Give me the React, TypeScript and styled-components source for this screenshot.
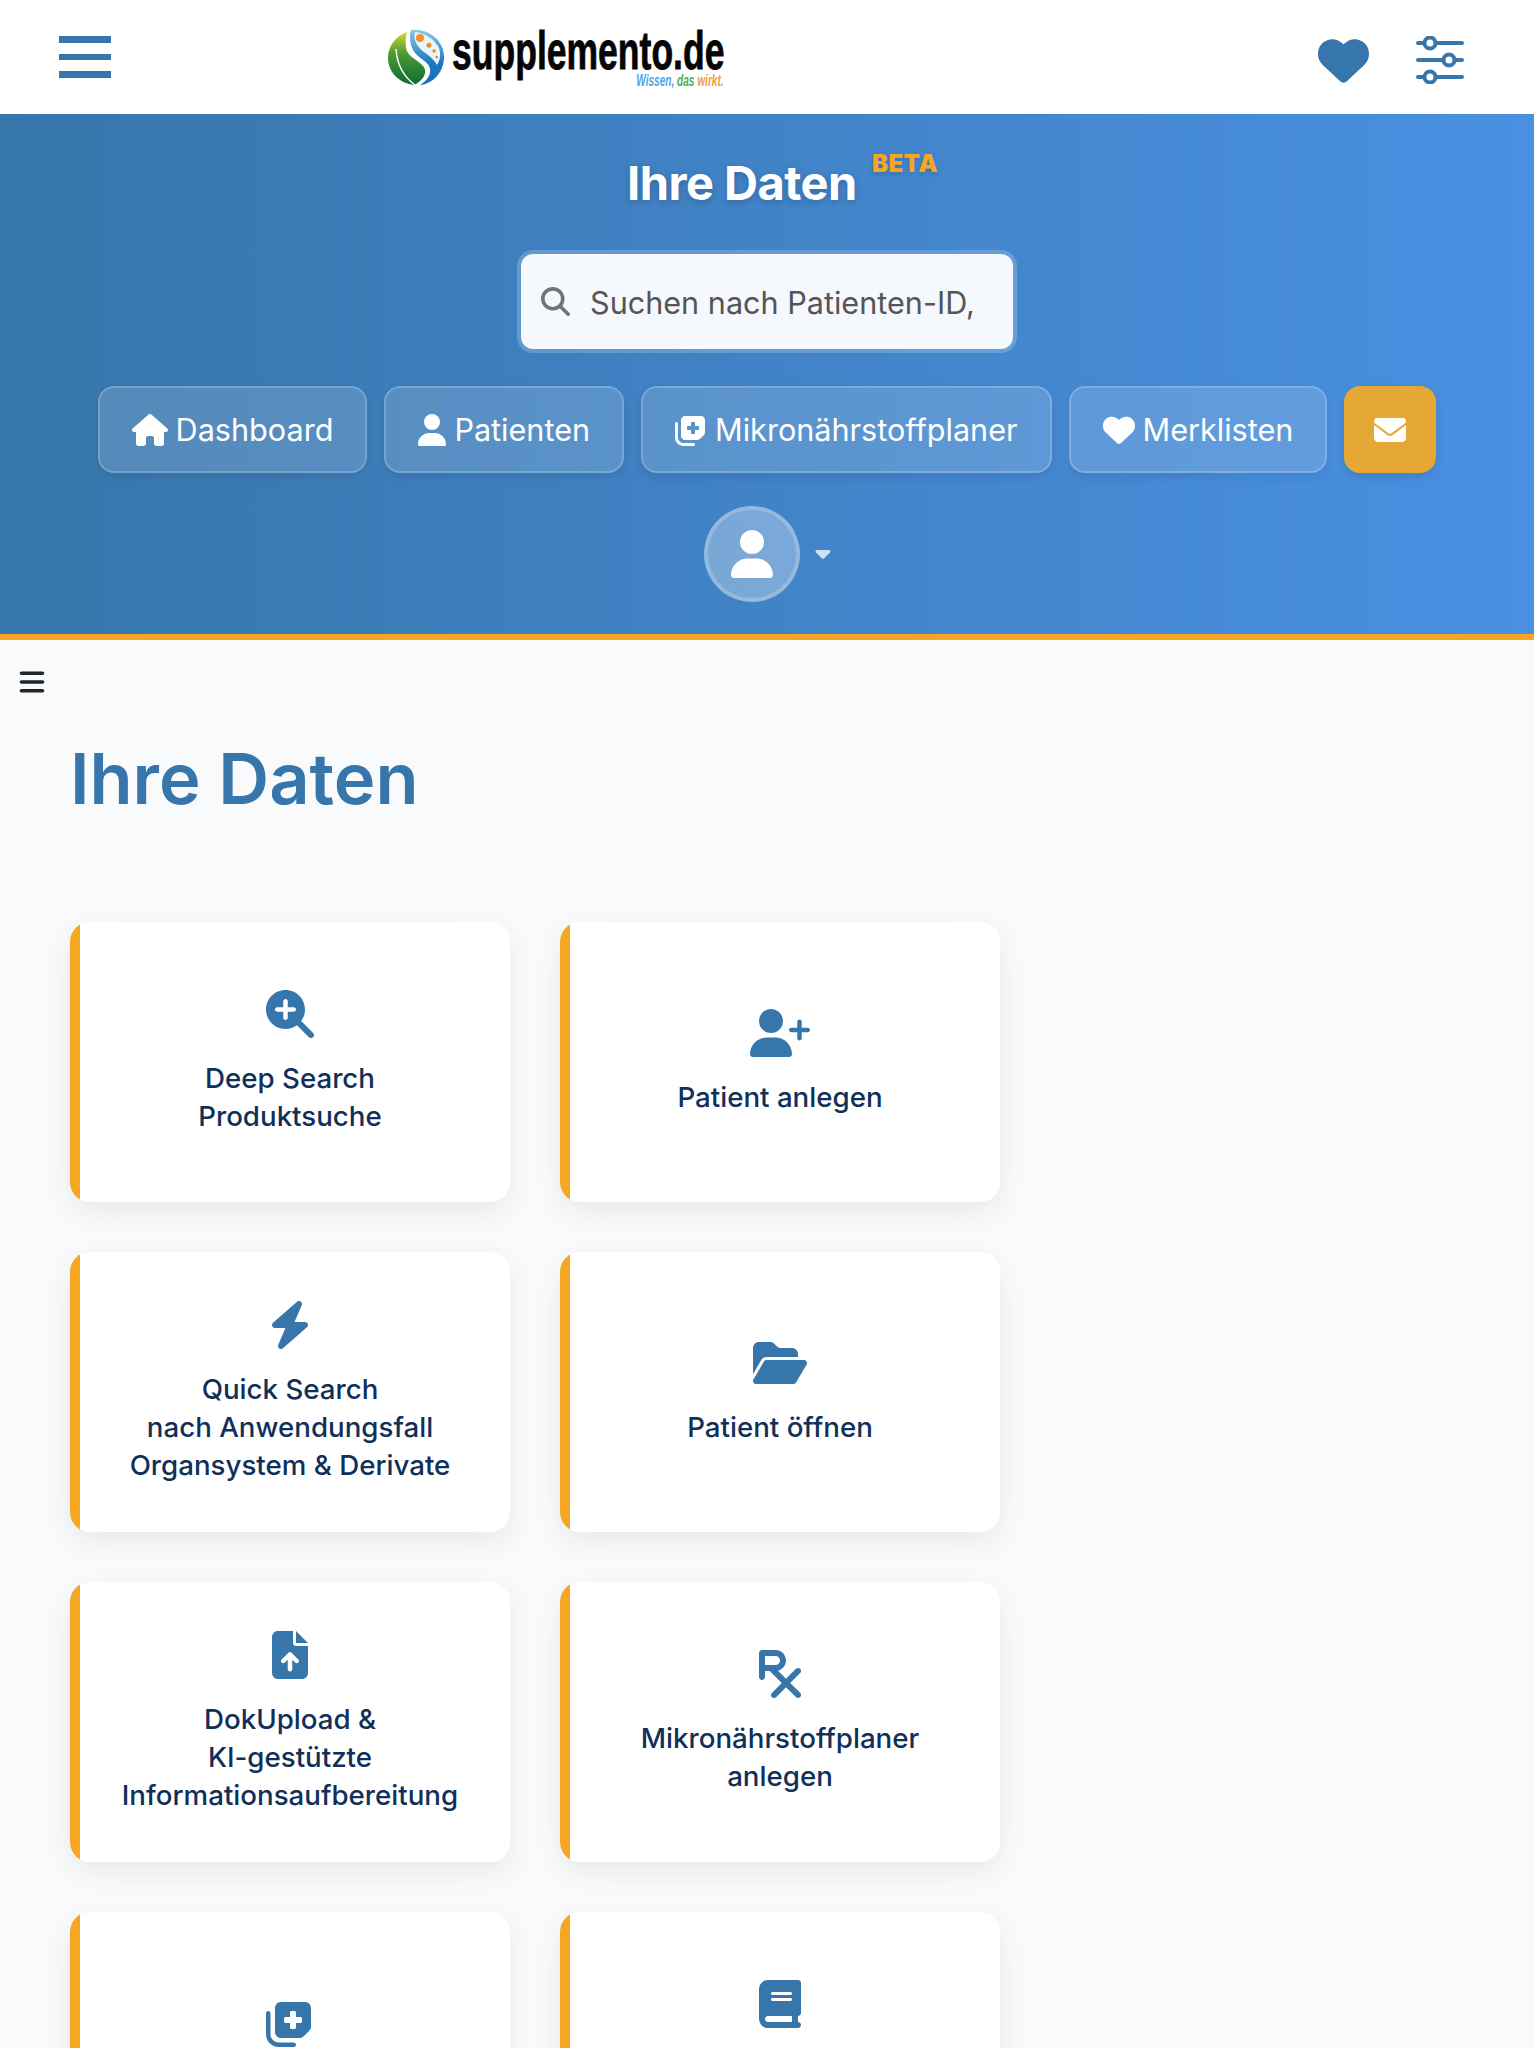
import React from "react";
import styled, { createGlobalStyle } from "styled-components";
import {
  FaBars, FaBolt, FaBook, FaCaretDown, FaEnvelope, FaFileArrowUp, FaFolderOpen, FaHeart, FaHouse,
  FaMagnifyingGlass, FaMagnifyingGlassPlus, FaNotesMedical, FaPrescription, FaUser, FaUserPlus,
} from "react-icons/fa6";

const Global = createGlobalStyle`
  html, body { margin: 0; padding: 0; background: #f9fafc; }
  body { font-family: Inter, "Liberation Sans", sans-serif; }
  * { box-sizing: border-box; }
`;
const Page = styled.div`height: 2048px; overflow: hidden; background: #f9fafc;`;
const TopBar = styled.header`height: 114px; background: #fff; display: flex; align-items: center; padding: 0 70px 0 59px;`;
const Burger = styled.div`width: 52px; display: flex; flex-direction: column; gap: 11px;`;
const BurgerLine = styled.span`height: 6.5px; background: #3776ab;`;
const Logo = styled.div`display: flex; align-items: center; margin-left: 277px; gap: 7px;`;
const Wordmark = styled.div`width: 272px; height: 62px; display: flex; flex-direction: column; align-items: flex-end;`;
const WordText = styled.span`font-family: "Liberation Sans", sans-serif; font-weight: 700; font-size: 53px; line-height: 50px; color: #050505; white-space: nowrap; transform: scaleX(.67); transform-origin: right center; -webkit-text-stroke: .8px #050505;`;
const Tagline = styled.span`font-family: "Liberation Sans", sans-serif; font-style: italic; font-weight: 700; font-size: 16px; line-height: 14px; margin-top: -2px; white-space: nowrap; transform: scaleX(.63); transform-origin: right center;`;
const TagWord = styled.span<{ $c: string }>`color: ${p => p.$c};`;
const TopActions = styled.div`margin-left: auto; padding-top: 6px; display: flex; align-items: center; gap: 47px; color: #3776ab;`;
const Hero = styled.section`height: 526px; background: linear-gradient(90deg, #3776ab 0%, #4a90e2 100%); border-bottom: 6px solid #f5a623; display: flex; flex-direction: column; align-items: center; padding-top: 33px;`;
const HeroTitle = styled.h1`margin: 1px 0 0 31px; height: 69px; display: flex; color: #fff; font-size: 47px; font-weight: 700; line-height: 70px; letter-spacing: -.5px; text-shadow: 0 2px 6px rgba(0,0,0,.2);`;
const Beta = styled.span`font-size: 24px; line-height: 30px; height: 30px; font-weight: 900; color: #f5a623; margin: 1px 0 0 15px; letter-spacing: .5px; text-shadow: 0 2px 4px rgba(0,0,0,.15);`;
const Search = styled.label`margin-top: 33px; width: 500px; height: 103px; border: 4px solid rgba(255,255,255,.2); border-radius: 16px; background: #f5f8fc; background-clip: padding-box; display: flex; align-items: center; padding: 0 20px; gap: 20px; color: #6c757d;`;
const SearchInput = styled.input`border: 0; outline: 0; background: transparent; flex: 1; min-width: 0; padding: 2px 0 0; font: 400 30.6px Inter, sans-serif; color: #555; &::placeholder { color: #555; opacity: 1; }`;
const Nav = styled.nav`margin-top: 33px; display: flex; gap: 17px;`;
const NavButton = styled.a<{ $icon: number }>`height: 87px; padding: 0 32px; display: flex; align-items: center; gap: 8px; border: 2px solid rgba(255,255,255,.2); border-radius: 16px; background: rgba(255,255,255,.14); color: #fff; font-size: 30.6px; font-weight: 400; box-shadow: 0 4px 10px rgba(0,0,0,.08); white-space: nowrap; svg { height: 32px; width: ${p => p.$icon}px; }`;
const MailButton = styled.a`width: 92px; height: 87px; border-radius: 16px; background: #e6a835; color: #fff; display: flex; align-items: center; justify-content: center; box-shadow: 0 4px 10px rgba(0,0,0,.1);`;
const Account = styled.div`margin: 33px 0 0 5px; display: flex; align-items: center; gap: 11px;`;
const Avatar = styled.div`width: 96px; height: 96px; border-radius: 50%; background: rgba(255,255,255,.3); border: 4px solid rgba(255,255,255,.2); background-clip: border-box; display: flex; align-items: center; justify-content: center; color: #fff;`;
const Caret = styled.span`display: flex; padding-bottom: 2px; color: rgba(255,255,255,.75);`;
const Main = styled.main`padding: 26px 0 0 0;`;
const SideToggle = styled.div`padding-left: 18px; height: 32px; display: flex; align-items: center; color: #212529;`;
const PageTitle = styled.h2`margin: 36px 0 0 70px; font-size: 70.4px; line-height: 90px; font-weight: 600; color: #3776ab; font-family: Inter, sans-serif;`;
const Grid = styled.div`margin: 98px 0 0 70px; display: grid; grid-template-columns: 440px 440px; grid-auto-rows: 280px; gap: 50px;`;
const Card = styled.a`background: linear-gradient(90deg, #f5a623 10px, #fff 10px); border-radius: 20px; box-shadow: 0 10px 30px rgba(0,0,0,.07); display: flex; flex-direction: column; align-items: center; justify-content: center; color: #3776ab;`;
const CardIcon = styled.div<{ $w: number }>`height: 48px; display: flex; svg { height: 48px; width: ${p => p.$w}px; }`;
const CardLabel = styled.div<{ $lines: number }>`margin-top: 21px; min-height: ${p => p.$lines * 38}px; font-size: 27.7px; line-height: 38px; font-weight: 500; color: #10305a; text-align: center; white-space: pre-line;`;

const Sliders = () => (
  <svg width="48" height="48" viewBox="0 0 48 48" fill="none" stroke="#3776ab" strokeWidth="4" strokeLinecap="round">
    <path d="M2 7h44M2 24h44M2 41h44" />
    <circle cx="14" cy="7" r="5.5" fill="#fff" />
    <circle cx="33" cy="24" r="5.5" fill="#fff" />
    <circle cx="14" cy="41" r="5.5" fill="#fff" />
  </svg>
);
const LogoMark = () => (
  <svg width="57" height="57" viewBox="0 0 57 57">
    <defs>
      <linearGradient id="g" x1="0" y1="0" x2="0" y2="1"><stop offset="0" stopColor="#d8d62a" /><stop offset=".4" stopColor="#4d9a35" /><stop offset="1" stopColor="#0c6b32" /></linearGradient>
      <linearGradient id="b" x1="0" y1="0" x2="0" y2="1"><stop offset="0" stopColor="#8cc8ea" /><stop offset=".6" stopColor="#1a78c0" /><stop offset="1" stopColor="#1a6fb0" /></linearGradient>
    </defs>
    <path d="M19 3C8 7 0 17 0 29c0 14 11 25 26 27 8-4 12-10 11-15-1-7-12-10-17-17-3-5-3-14-1-21z" fill="url(#g)" />
    <path d="M8 20c1 15 8 28 19 36" stroke="#fff" strokeWidth="1.5" fill="none" />
    <path d="M23 1c17-2 33 10 33 27 0 15-11 27-24 28 7-4 11-10 10-16-1-8-12-10-17-19-3-6-4-14-2-20z" fill="url(#b)" />
    <path d="M27 3c-2 7 2 15 9 20 6 4 11 9 13 13 4-6 4-14 1-19C45 9 36 4 27 3z" fill="#eaf4fb" />
    <circle cx="32" cy="9" r="4" fill="#f0902a" /><circle cx="41" cy="16.3" r="2.5" fill="#f0902a" /><circle cx="46" cy="22" r="1.8" fill="#f0902a" /><circle cx="48.7" cy="28" r="1.2" fill="#e8702a" />
  </svg>
);

const cards = [
  { icon: <FaMagnifyingGlassPlus />, w: 48, text: "Deep Search\nProduktsuche", lines: 2 },
  { icon: <FaUserPlus />, w: 60, text: "Patient anlegen", lines: 1 },
  { icon: <FaBolt />, w: 48, text: "Quick Search\nnach Anwendungsfall\nOrgansystem & Derivate", lines: 3 },
  { icon: <FaFolderOpen />, w: 54, text: "Patient öffnen", lines: 1 },
  { icon: <FaFileArrowUp />, w: 48, text: "DokUpload &\nKI-gestützte\nInformationsaufbereitung", lines: 3 },
  { icon: <FaPrescription />, w: 48, text: "Mikronährstoffplaner\nanlegen", lines: 2 },
  { icon: <FaNotesMedical />, w: 48, text: "", lines: 1 },
  { icon: <FaBook />, w: 48, text: "", lines: 2 },
];

export default function App() {
  return (
    <Page>
      <Global />
      <TopBar>
        <Burger><BurgerLine /><BurgerLine /><BurgerLine /></Burger>
        <Logo>
          <LogoMark />
          <Wordmark>
            <WordText>supplemento.de</WordText>
            <Tagline><TagWord $c="#4ea5e8">Wissen, </TagWord><TagWord $c="#4caf50">das </TagWord><TagWord $c="#f0a040">wirkt.</TagWord></Tagline>
          </Wordmark>
        </Logo>
        <TopActions><FaHeart size={51} /><Sliders /></TopActions>
      </TopBar>
      <Hero>
        <HeroTitle>Ihre Daten<Beta>BETA</Beta></HeroTitle>
        <Search><FaMagnifyingGlass size={29} /><SearchInput placeholder="Suchen nach Patienten-ID," /></Search>
        <Nav>
          <NavButton $icon={36}><FaHouse />Dashboard</NavButton>
          <NavButton $icon={28}><FaUser />Patienten</NavButton>
          <NavButton $icon={32}><FaNotesMedical />Mikronährstoffplaner</NavButton>
          <NavButton $icon={32}><FaHeart />Merklisten</NavButton>
          <MailButton><FaEnvelope size={32} /></MailButton>
        </Nav>
        <Account>
          <Avatar><FaUser size={48} /></Avatar>
          <Caret><FaCaretDown size={24} /></Caret>
        </Account>
      </Hero>
      <Main>
        <SideToggle><FaBars size={28} /></SideToggle>
        <PageTitle>Ihre Daten</PageTitle>
        <Grid>
          {cards.map((c, i) => (
            <Card key={i}><CardIcon $w={c.w}>{c.icon}</CardIcon><CardLabel $lines={c.lines}>{c.text}</CardLabel></Card>
          ))}
        </Grid>
      </Main>
    </Page>
  );
}
